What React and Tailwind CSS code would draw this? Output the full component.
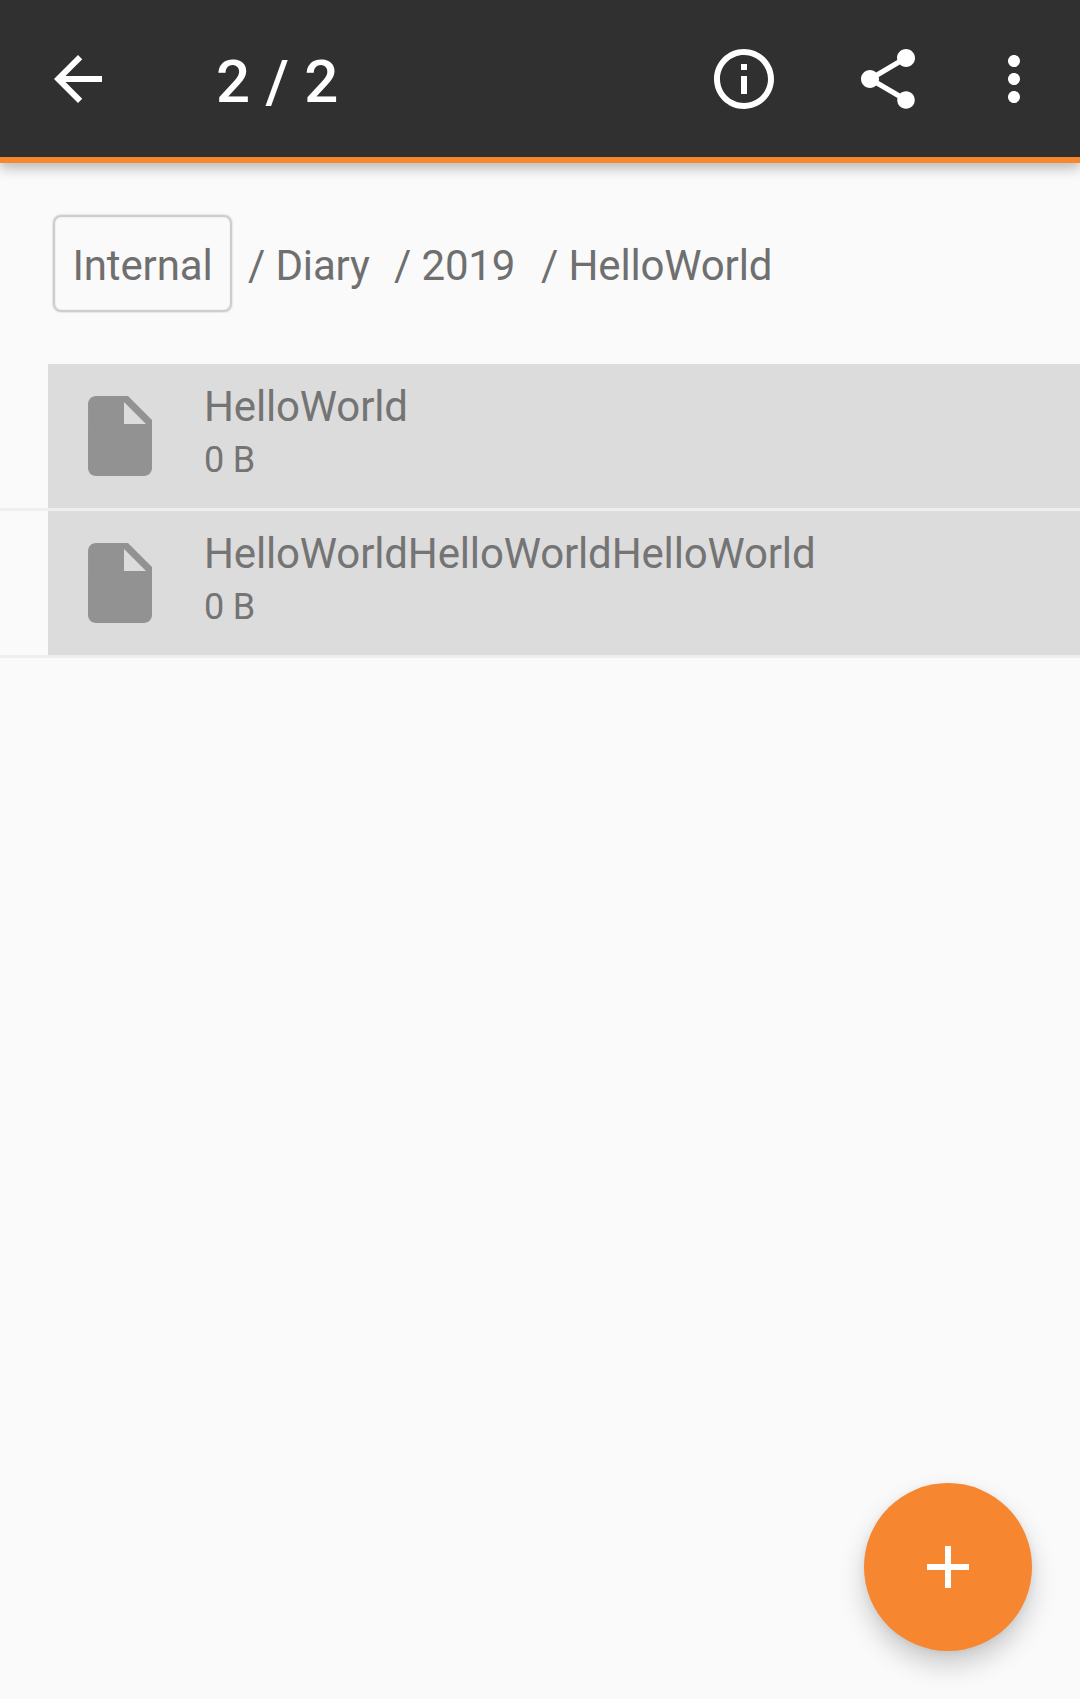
import React from "react";

function Icon({ d, className }) {
  return (
    <svg viewBox="0 0 24 24" fill="currentColor" aria-hidden="true" className={className}>
      <path d={d} />
    </svg>
  );
}

const icons = {
  back: "M20 11H7.83l5.59-5.59L12 4l-8 8 8 8 1.41-1.41L7.83 13H20v-2z",
  info: "M11 17h2v-6h-2v6zm1-15C6.48 2 2 6.48 2 12s4.48 10 10 10 10-4.48 10-10S17.52 2 12 2zm0 18c-4.41 0-8-3.59-8-8s3.59-8 8-8 8 3.59 8 8-3.59 8-8 8zM11 9h2V7h-2v2z",
  share:
    "M18 16.08c-.76 0-1.44.3-1.96.77L8.91 12.7c.05-.23.09-.46.09-.7s-.04-.47-.09-.7l7.05-4.11c.54.5 1.25.81 2.04.81 1.66 0 3-1.34 3-3s-1.34-3-3-3-3 1.34-3 3c0 .24.04.47.09.7L8.04 9.81C7.5 9.31 6.79 9 6 9c-1.66 0-3 1.34-3 3s1.34 3 3 3c.79 0 1.5-.31 2.04-.81l7.12 4.16c-.05.21-.08.43-.08.65 0 1.61 1.31 2.92 2.92 2.92s2.92-1.31 2.92-2.92-1.31-2.92-2.92-2.92z",
  more: "M12 8c1.1 0 2-.9 2-2s-.9-2-2-2-2 .9-2 2 .9 2 2 2zm0 2c-1.1 0-2 .9-2 2s.9 2 2 2 2-.9 2-2-.9-2-2-2zm0 6c-1.1 0-2 .9-2 2s.9 2 2 2 2-.9 2-2-.9-2-2-2z",
  file: "M6 2c-1.1 0-1.99.9-1.99 2L4 20c0 1.1.89 2 1.99 2H18c1.1 0 2-.9 2-2V8l-6-6H6zm7 7V3.5L18.5 9H13z",
  add: "M19 13h-6v6h-2v-6H5v-2h6V5h2v6h6v2z",
};

const files = [
  { name: "HelloWorld", size: "0 B" },
  { name: "HelloWorldHelloWorldHelloWorld", size: "0 B" },
];

function FileRow({ name, size }) {
  return (
    <li className="border-b-[3px] border-[#eeeeee] pl-12">
      <div className="flex h-36 items-center bg-[#dcdcdc] pl-6 text-[#747474]">
        <Icon d={icons.file} className="size-24 shrink-0 text-[#929292]" />
        <div className="ml-9 h-full pt-[18px]">
          <div className="text-[42px] leading-[49px] tracking-[-0.15px]">{name}</div>
          <div className="mt-[5px] text-[36px] leading-[48px] tracking-[-0.15px]">{size}</div>
        </div>
      </div>
    </li>
  );
}

export default function App() {
  return (
    <div className="relative h-[1699px] w-[1080px] overflow-hidden bg-[#fafafa] font-[Roboto,sans-serif]">
      <header className="flex h-[163px] items-center border-b-6 border-[#f68730] bg-[#303030] pr-[30px] pl-[42px] text-white shadow-[0_5px_12px_rgba(0,0,0,0.27)]">
        <Icon d={icons.back} className="size-18" />
        <h1 className="ml-[102px] flex-1 pt-1.5 text-[60px] leading-[70px] font-medium tracking-[0.2px]">2 / 2</h1>
        <Icon d={icons.info} className="mr-18 size-18" />
        <Icon d={icons.share} className="mr-[54px] size-18" />
        <Icon d={icons.more} className="size-18" />
      </header>

      <nav className="flex h-[201px] items-center pl-[53px] text-[42px] leading-[49px] tracking-[-0.15px] text-[#6f6f6f]">
        <div className="flex h-[97px] w-[179px] items-center justify-center rounded-lg border-2 border-[#cdcdcd] pt-1 shadow-[0_0_2px_rgba(0,0,0,0.25),inset_0_0_2px_rgba(0,0,0,0.12)]">
          Internal
        </div>
        <span className="ml-4 w-[146px] pt-1">/ Diary</span>
        <span className="w-[147px] pt-1">/ 2019</span>
        <span className="pt-1">/ HelloWorld</span>
      </nav>

      <ul>
        {files.map((file) => (
          <FileRow key={file.name} {...file} />
        ))}
      </ul>

      <button
        aria-label="Add"
        className="absolute right-12 bottom-12 flex size-42 items-center justify-center rounded-full bg-[#f68730] text-white shadow-[0_14px_26px_rgba(0,0,0,0.19),0_2px_8px_rgba(0,0,0,0.06)]"
      >
        <Icon d={icons.add} className="size-18" />
      </button>
    </div>
  );
}
